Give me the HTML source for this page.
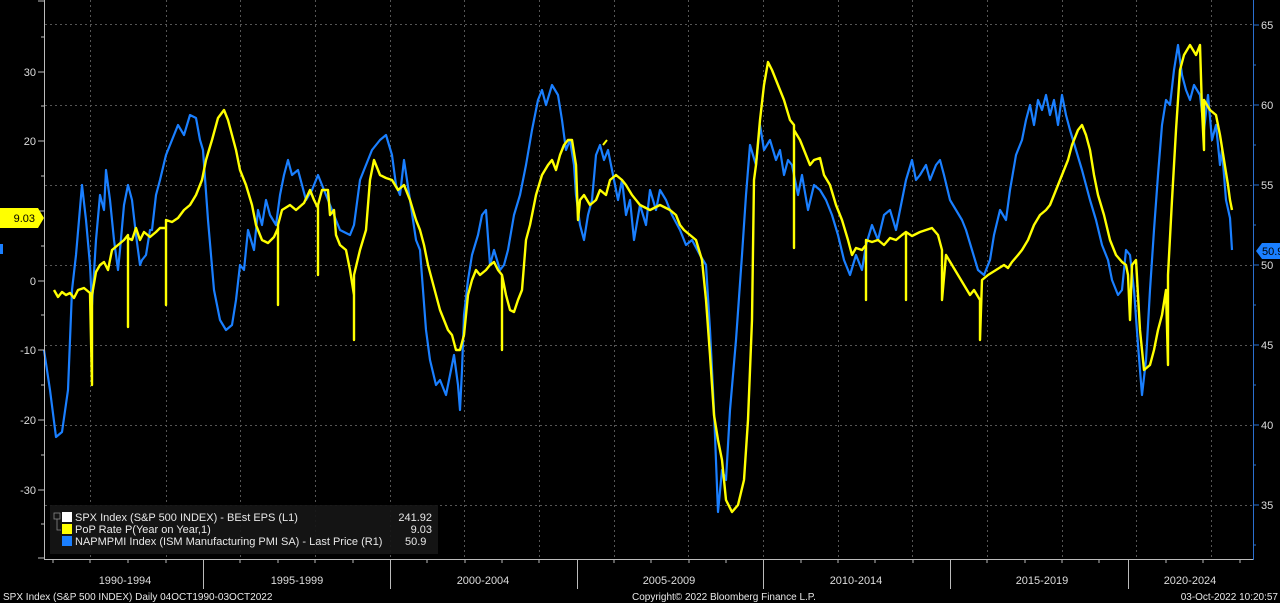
<!DOCTYPE html>
<html><head><meta charset="utf-8"><style>
html,body{margin:0;padding:0;background:#000;width:1280px;height:603px;overflow:hidden}
svg{display:block}
text{font-family:"Liberation Sans",sans-serif}
</style></head><body>
<svg width="1280" height="603" viewBox="0 0 1280 603">
<rect width="1280" height="603" fill="#000"/>
<g stroke="#555" stroke-width="1" stroke-dasharray="2,3">
<line x1="45" y1="24.5" x2="1252" y2="24.5"/><line x1="45" y1="105.5" x2="1252" y2="105.5"/><line x1="45" y1="185.5" x2="1252" y2="185.5"/><line x1="45" y1="265.5" x2="1252" y2="265.5"/><line x1="45" y1="345.5" x2="1252" y2="345.5"/><line x1="45" y1="425.5" x2="1252" y2="425.5"/><line x1="45" y1="505.5" x2="1252" y2="505.5"/>
<line x1="90.5" y1="0" x2="90.5" y2="559"/><line x1="166.5" y1="0" x2="166.5" y2="559"/><line x1="240.5" y1="0" x2="240.5" y2="559"/><line x1="315.5" y1="0" x2="315.5" y2="559"/><line x1="390.5" y1="0" x2="390.5" y2="559"/><line x1="464.5" y1="0" x2="464.5" y2="559"/><line x1="539.5" y1="0" x2="539.5" y2="559"/><line x1="614.5" y1="0" x2="614.5" y2="559"/><line x1="688.5" y1="0" x2="688.5" y2="559"/><line x1="763.5" y1="0" x2="763.5" y2="559"/><line x1="838.5" y1="0" x2="838.5" y2="559"/><line x1="912.5" y1="0" x2="912.5" y2="559"/><line x1="987.5" y1="0" x2="987.5" y2="559"/><line x1="1062.5" y1="0" x2="1062.5" y2="559"/><line x1="1136.5" y1="0" x2="1136.5" y2="559"/><line x1="1211.5" y1="0" x2="1211.5" y2="559"/>
</g>
<polyline fill="none" stroke="#1a7fff" stroke-width="2.2" stroke-linejoin="round" points="44,350 50,390 56,437 62,432 68,390 72,290 76,255 82,185 86,220 90,265 92,305 96,240 100,195 104,210 106,170 110,200 114,240 118,270 120,250 124,205 128,185 132,200 136,235 140,265 142,260 146,255 150,230 152,230 156,195 160,180 166,155 172,140 178,125 184,135 190,115 196,118 200,140 203,150 208,220 214,290 220,320 226,330 232,325 236,300 240,265 244,270 248,230 254,250 258,210 262,225 266,200 270,215 276,225 280,195 284,175 288,160 292,175 298,170 302,185 306,200 312,190 318,175 322,185 330,205 340,230 350,235 354,225 360,180 366,165 372,150 380,140 386,135 392,155 396,185 400,195 404,160 410,200 416,240 420,250 426,330 430,360 436,385 440,380 446,395 450,375 454,355 458,385 460,410 462,370 464,315 468,280 472,255 478,235 482,215 486,210 490,265 494,250 500,270 504,265 508,250 514,215 520,195 526,165 532,130 538,100 542,90 546,105 552,85 558,95 562,120 566,150 570,140 574,165 576,195 580,225 584,240 588,215 592,200 596,155 600,145 604,160 608,150 612,170 618,200 622,180 626,215 630,200 634,240 640,205 646,225 650,190 656,210 660,190 666,200 672,215 680,230 686,245 692,240 700,255 706,265 710,330 714,410 718,512 722,470 726,480 730,410 736,340 742,255 746,195 750,145 756,165 760,125 764,150 770,140 776,160 780,150 784,175 788,160 792,165 798,195 802,175 808,210 814,185 820,190 826,200 832,215 838,235 844,260 850,275 856,255 862,270 866,245 872,225 878,240 884,215 890,210 896,230 900,210 906,180 912,160 916,180 920,175 926,165 930,180 936,165 940,160 944,175 950,200 956,210 962,220 966,230 972,250 978,270 984,275 990,260 994,235 1000,210 1006,220 1010,190 1016,155 1022,140 1026,120 1030,105 1034,125 1038,100 1042,110 1046,95 1050,115 1054,100 1058,125 1062,95 1066,115 1070,130 1076,150 1082,170 1086,185 1090,200 1096,220 1102,245 1108,260 1112,280 1118,295 1122,290 1126,250 1130,255 1134,290 1138,345 1142,395 1146,360 1150,290 1154,230 1158,175 1162,125 1166,100 1170,105 1174,70 1178,45 1182,75 1186,90 1190,100 1194,85 1200,95 1204,130 1208,95 1212,140 1216,125 1220,165 1222,150 1226,200 1230,218 1232,250"/>
<polyline fill="none" stroke="#ffff00" stroke-width="2.4" stroke-linejoin="round" points="54,290 58,297 62,292 66,295 70,293 74,298 78,290 84,288 90,293 92,385 92,295 96,272 100,265 104,262 108,270 112,250 118,245 124,240 128,235 128,327 128,238 132,240 136,228 140,240 144,232 150,237 156,232 160,228 166,228 166,305 166,220 172,222 178,218 184,210 190,205 196,195 202,180 206,160 212,140 218,118 224,110 228,120 232,135 236,150 240,170 246,185 252,205 256,225 262,240 268,243 274,237 278,228 278,305 278,225 282,210 290,205 296,210 304,203 310,190 314,200 318,208 318,275 318,205 322,190 328,190 330,215 334,210 336,235 340,245 346,250 350,270 354,295 354,340 354,275 360,250 366,230 370,180 374,160 380,175 386,178 392,180 398,190 404,185 410,200 416,220 420,230 424,245 428,265 432,280 436,295 440,310 444,320 448,330 452,335 456,350 460,350 464,335 468,295 472,280 476,270 480,275 486,270 490,265 494,262 498,270 502,275 502,350 502,275 506,295 510,310 514,312 518,300 522,290 526,240 530,225 536,195 542,175 548,165 552,160 556,170 560,155 564,145 568,140 572,140 576,165 578,220 580,200 584,195 590,205 596,200 600,190 606,195 610,180 616,175 622,180 626,185 632,195 640,205 650,210 660,205 670,210 676,215 680,225 684,230 690,235 696,240 702,260 706,300 710,355 714,415 718,440 722,460 726,500 732,512 738,505 744,480 748,420 752,320 754,180 756,165 760,120 764,85 768,62 772,70 778,85 784,100 790,120 794,125 794,248 794,130 800,140 806,155 810,165 814,160 820,158 824,175 830,185 836,205 842,220 848,240 852,255 856,248 862,250 866,245 866,300 866,240 872,242 878,240 884,245 890,238 896,240 902,235 906,232 906,300 906,232 912,236 920,232 926,230 932,228 938,235 942,250 942,300 946,255 952,265 958,275 964,285 970,295 974,290 980,300 980,340 982,280 988,275 996,270 1004,265 1008,268 1012,262 1018,255 1022,250 1028,240 1034,225 1040,215 1046,210 1050,205 1056,190 1062,175 1068,160 1072,145 1078,130 1082,125 1086,135 1090,150 1094,175 1098,195 1104,215 1110,240 1116,255 1122,262 1126,265 1128,275 1130,320 1132,265 1136,260 1140,330 1144,370 1150,365 1154,350 1158,330 1162,315 1166,290 1168,365 1168,275 1172,200 1176,130 1180,70 1184,55 1190,45 1196,55 1200,45 1202,110 1204,150 1204,100 1210,110 1216,115 1220,135 1224,160 1228,185 1230,200 1232,210"/>
<line x1="603" y1="145" x2="607" y2="140" stroke="#ffff00" stroke-width="2"/>
<!-- axes -->
<line x1="44.5" y1="0" x2="44.5" y2="560" stroke="#bbb" stroke-width="1"/>
<line x1="44" y1="559.5" x2="1253" y2="559.5" stroke="#bbb" stroke-width="1"/>
<line x1="1253.5" y1="0" x2="1253.5" y2="560" stroke="#2a6fd0" stroke-width="1"/>
<g stroke="#bbb"><line x1="38" y1="1" x2="44" y2="1"/><line x1="38" y1="72" x2="44" y2="72"/><line x1="38" y1="141" x2="44" y2="141"/><line x1="38" y1="211" x2="44" y2="211"/><line x1="38" y1="281" x2="44" y2="281"/><line x1="38" y1="350" x2="44" y2="350"/><line x1="38" y1="420" x2="44" y2="420"/><line x1="38" y1="490" x2="44" y2="490"/><line x1="38" y1="558" x2="44" y2="558"/>
<line x1="41" y1="37" x2="44" y2="37"/><line x1="41" y1="106" x2="44" y2="106"/><line x1="41" y1="176" x2="44" y2="176"/><line x1="41" y1="246" x2="44" y2="246"/><line x1="41" y1="315" x2="44" y2="315"/><line x1="41" y1="385" x2="44" y2="385"/><line x1="41" y1="455" x2="44" y2="455"/><line x1="41" y1="524" x2="44" y2="524"/></g>
<g fill="#ddd" font-size="11" text-anchor="end"><text x="36" y="76">30</text><text x="36" y="145">20</text><text x="36" y="285">0</text><text x="36" y="354">-10</text><text x="36" y="424">-20</text><text x="36" y="494">-30</text></g>
<g stroke="#2a6fd0"><line x1="1253" y1="25" x2="1259" y2="25"/><line x1="1253" y1="105" x2="1259" y2="105"/><line x1="1253" y1="185" x2="1259" y2="185"/><line x1="1253" y1="265" x2="1259" y2="265"/><line x1="1253" y1="345" x2="1259" y2="345"/><line x1="1253" y1="425" x2="1259" y2="425"/><line x1="1253" y1="505" x2="1259" y2="505"/>
<line x1="1253" y1="65" x2="1256" y2="65"/><line x1="1253" y1="145" x2="1256" y2="145"/><line x1="1253" y1="225" x2="1256" y2="225"/><line x1="1253" y1="305" x2="1256" y2="305"/><line x1="1253" y1="385" x2="1256" y2="385"/><line x1="1253" y1="465" x2="1256" y2="465"/><line x1="1253" y1="545" x2="1256" y2="545"/></g>
<g fill="#ddd" font-size="11"><text x="1261" y="29">65</text><text x="1261" y="109">60</text><text x="1261" y="189">55</text><text x="1261" y="269">50</text><text x="1261" y="349">45</text><text x="1261" y="429">40</text><text x="1261" y="509">35</text></g>
<path d="M1262,243 H1280 V259 H1262 L1256,251 Z" fill="#1a7fff"/>
<text x="1262" y="255" font-size="11" fill="#000">50.9</text>
<path d="M0,208 H38 L44,218 L38,228 H0 Z" fill="#ffff00"/>
<text x="35" y="222" font-size="11" fill="#000" text-anchor="end">9.03</text>
<rect x="0" y="244" width="3" height="10" fill="#1a7fff"/>
<!-- x axis -->
<g stroke="#bbb"><line x1="203.5" y1="559" x2="203.5" y2="589"/><line x1="390.5" y1="559" x2="390.5" y2="589"/><line x1="577.5" y1="559" x2="577.5" y2="589"/><line x1="763.5" y1="559" x2="763.5" y2="589"/><line x1="950.5" y1="559" x2="950.5" y2="589"/><line x1="1128.5" y1="559" x2="1128.5" y2="589"/>
<line x1="53" y1="559" x2="53" y2="563"/><line x1="90" y1="559" x2="90" y2="563"/><line x1="128" y1="559" x2="128" y2="563"/><line x1="166" y1="559" x2="166" y2="563"/><line x1="240" y1="559" x2="240" y2="563"/><line x1="278" y1="559" x2="278" y2="563"/><line x1="315" y1="559" x2="315" y2="563"/><line x1="353" y1="559" x2="353" y2="563"/><line x1="427" y1="559" x2="427" y2="563"/><line x1="465" y1="559" x2="465" y2="563"/><line x1="502" y1="559" x2="502" y2="563"/><line x1="539" y1="559" x2="539" y2="563"/><line x1="614" y1="559" x2="614" y2="563"/><line x1="651" y1="559" x2="651" y2="563"/><line x1="689" y1="559" x2="689" y2="563"/><line x1="726" y1="559" x2="726" y2="563"/><line x1="801" y1="559" x2="801" y2="563"/><line x1="838" y1="559" x2="838" y2="563"/><line x1="875" y1="559" x2="875" y2="563"/><line x1="913" y1="559" x2="913" y2="563"/><line x1="987" y1="559" x2="987" y2="563"/><line x1="1025" y1="559" x2="1025" y2="563"/><line x1="1062" y1="559" x2="1062" y2="563"/><line x1="1099" y1="559" x2="1099" y2="563"/><line x1="1166" y1="559" x2="1166" y2="563"/><line x1="1203" y1="559" x2="1203" y2="563"/><line x1="1240" y1="559" x2="1240" y2="563"/></g>
<g fill="#ddd" font-size="11" text-anchor="middle"><text x="125" y="584">1990-1994</text><text x="297" y="584">1995-1999</text><text x="483" y="584">2000-2004</text><text x="669" y="584">2005-2009</text><text x="856" y="584">2010-2014</text><text x="1042" y="584">2015-2019</text><text x="1190" y="584">2020-2024</text></g>
<!-- legend -->
<rect x="50" y="505" width="388" height="49" fill="#161616" opacity="0.92"/>
<rect x="54" y="513" width="6" height="6" fill="none" stroke="#888" stroke-width="0.8"/>
<path d="M57,519 V530 H61" fill="none" stroke="#888" stroke-width="0.8"/>
<rect x="62" y="512" width="10" height="10" fill="#fff"/>
<rect x="62" y="524" width="10" height="10" fill="#ffff00"/>
<rect x="62" y="536" width="10" height="10" fill="#1a7fff"/>
<g fill="#e8e8e8" font-size="11"><text x="75" y="521">SPX Index (S&amp;P 500 INDEX) - BEst EPS (L1)</text><text x="75" y="533">PoP Rate P(Year on Year,1)</text><text x="75" y="545">NAPMPMI Index (ISM Manufacturing PMI SA) - Last Price (R1)</text>
<text x="432" y="521" text-anchor="end">241.92</text><text x="432" y="533" text-anchor="end">9.03</text><text x="405" y="545">50.9</text></g>
<!-- footer -->
<g fill="#e8e8e8" font-size="10"><text x="3" y="600">SPX Index (S&amp;P 500 INDEX)  Daily 04OCT1990-03OCT2022</text><text x="632" y="600">Copyright© 2022 Bloomberg Finance L.P.</text><text x="1278" y="600" text-anchor="end">03-Oct-2022 10:20:57</text></g>
</svg>
</body></html>
